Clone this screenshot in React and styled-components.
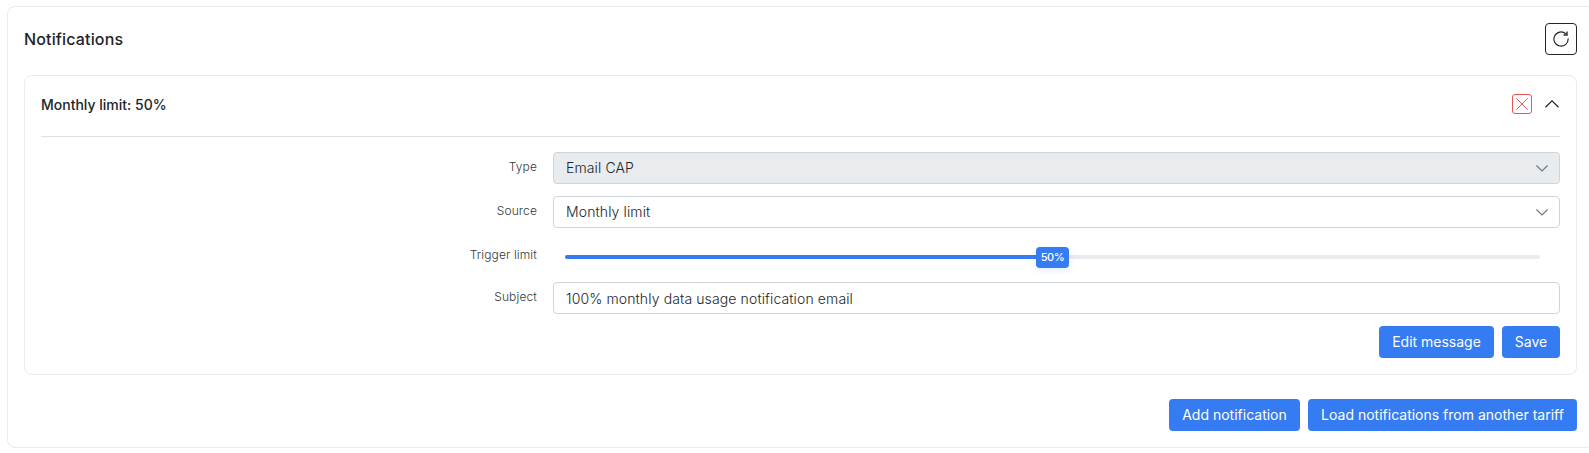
import React from "react";
import styled, { createGlobalStyle } from "styled-components";

const GlobalStyle = createGlobalStyle`
  *, *::before, *::after { box-sizing: border-box; }
  html, body { margin: 0; background: #fff; overflow: hidden; }
  body { font-family: Inter, "Liberation Sans", sans-serif; font-size: 14px; line-height: 20px; color: #212529; }
`;

const Page = styled.main`
  width: 1594px;
  height: 453px;
  padding: 6px 0 5px 7px;
`;

const Panel = styled.section`
  height: 442px;
  padding: 16px;
  border: 1px solid #e8ebed;
  border-radius: 8px;
`;

const PanelHeader = styled.header`
  display: flex;
  align-items: center;
  justify-content: space-between;
  height: 32px;
`;

const Title = styled.h2`
  margin: 0;
  font-size: 16px;
  line-height: 24px;
  font-weight: 500;
  letter-spacing: 0.15px;
`;

const RefreshButton = styled.button`
  display: grid;
  place-items: center;
  width: 32px;
  height: 32px;
  padding: 0;
  color: #212529;
  background: #fff;
  border: 1px solid #212529;
  border-radius: 4px;
`;

const Card = styled.article`
  height: 300px;
  margin-top: 20px;
  padding: 0 16px;
  border: 1px solid #e8ebed;
  border-radius: 8px;
`;

const CardHeader = styled.header`
  display: flex;
  align-items: center;
  justify-content: space-between;
  height: 61px;
  padding-bottom: 3px;
  border-bottom: 1px solid #dee0e3;
`;

const CardTitle = styled.h3`
  margin: 0;
  font-size: 14px;
  font-weight: 500;
`;

const CardTools = styled.div`
  display: flex;
  align-items: center;
  gap: 12px;
  padding-bottom: 2px;
`;

const IconButton = styled.button`
  display: grid;
  place-items: center;
  width: ${(p) => p.$width || 20}px;
  height: 20px;
  padding: 0;
  color: ${(p) => (p.$danger ? "#ea5455" : "#212529")};
  background: none;
  border: ${(p) => (p.$danger ? "1px solid currentColor" : "0")};
  border-radius: 3px;
`;

const Form = styled.div`
  display: grid;
  gap: 12px;
  padding-top: 15px;
`;

const Row = styled.div`
  display: grid;
  grid-template-columns: 496px 1fr;
  column-gap: 16px;
  height: ${(p) => p.$height || 32}px;
`;

const Label = styled.label`
  padding-top: 5px;
  font-size: 12px;
  font-weight: 350;
  letter-spacing: 0.12px;
  text-align: right;
  color: #34383c;
`;

const Field = styled.div`
  display: flex;
  align-items: center;
  justify-content: space-between;
  height: 32px;
  padding: ${(p) => (p.$input ? "2px 11px 0 12px" : "0 11px 0 12px")};
  background: ${(p) => (p.$disabled ? "#e9ecef" : "#fff")};
  border: 1px solid #ced4da;
  border-radius: 4px;
  font-weight: 350;
  letter-spacing: 0.12px;
`;

const SliderArea = styled.div`
  padding: 15px 20px 0 12px;
`;

const Track = styled.div`
  position: relative;
  height: 4px;
  border-radius: 2px;
  background: #e9ecef;
`;

const TrackFill = styled.div`
  height: 4px;
  border-radius: 2px;
  background: #357bf2;
`;

const Thumb = styled.div`
  position: absolute;
  top: -8.5px;
  margin-left: -16.5px;
  width: 33px;
  height: 21.5px;
  border-radius: 4px;
  font-size: 11px;
  line-height: 21px;
  font-weight: 500;
  letter-spacing: -0.4px;
  text-align: center;
  color: #fff;
  background: #357bf2;
  box-shadow: 0 2px 6px rgba(53, 123, 242, 0.15);
`;

const Actions = styled.div`
  display: flex;
  justify-content: flex-end;
  gap: 8px;
  margin-top: ${(p) => p.$top || 0}px;
`;

const Button = styled.button`
  width: ${(p) => p.$width}px;
  height: 32px;
  padding: 0;
  border: 0;
  border-radius: 4px;
  background: #357bf2;
  color: #fff;
  font: 400 14px/32px Inter, "Liberation Sans", sans-serif;
  text-align: center;
  white-space: nowrap;
`;

const RefreshIcon = () => (
  <svg width="16" height="16" viewBox="0 0 16 16" fill="none" stroke="currentColor" strokeWidth="1.15">
    <path d="M15.1 7.4A7.1 7.1 0 1 1 12.8 2.8" />
    <path d="M14 .6V4H10.5" strokeWidth="1.4" />
  </svg>
);

const CrossIcon = () => (
  <svg width="12" height="12" viewBox="0 0 12 12" fill="none" stroke="currentColor">
    <path d="M.3.3l11.4 11.4M11.7.3L.3 11.7" />
  </svg>
);

const ChevronUp = () => (
  <svg width="14" height="8" viewBox="0 0 14 8" fill="none" stroke="currentColor" strokeWidth="1.2">
    <path d="M.5 7.2L7 .9l6.5 6.3" />
  </svg>
);

const ChevronDown = () => (
  <svg width="12" height="7" viewBox="0 0 12 7" fill="none" stroke="#6c757d" strokeWidth="1.1">
    <path d="M.4.5L6 6l5.6-5.5" />
  </svg>
);

export default function App() {
  const limit = 50;
  return (
    <>
      <GlobalStyle />
      <Page>
        <Panel>
          <PanelHeader>
            <Title>Notifications</Title>
            <RefreshButton aria-label="Refresh"><RefreshIcon /></RefreshButton>
          </PanelHeader>
          <Card>
            <CardHeader>
              <CardTitle>Monthly limit: {limit}%</CardTitle>
              <CardTools>
                <IconButton $danger aria-label="Delete"><CrossIcon /></IconButton>
                <IconButton $width={16} aria-label="Collapse"><ChevronUp /></IconButton>
              </CardTools>
            </CardHeader>
            <Form>
              <Row>
                <Label>Type</Label>
                <Field $disabled>Email CAP<ChevronDown /></Field>
              </Row>
              <Row>
                <Label>Source</Label>
                <Field>Monthly limit<ChevronDown /></Field>
              </Row>
              <Row $height={30}>
                <Label>Trigger limit</Label>
                <SliderArea>
                  <Track>
                    <TrackFill style={{ width: `${limit}%` }} />
                    <Thumb style={{ left: `${limit}%` }}>{limit}%</Thumb>
                  </Track>
                </SliderArea>
              </Row>
              <Row>
                <Label>Subject</Label>
                <Field $input>100% monthly data usage notification email</Field>
              </Row>
              <Actions>
                <Button $width={115}>Edit message</Button>
                <Button $width={58}>Save</Button>
              </Actions>
            </Form>
          </Card>
          <Actions $top={24}>
            <Button $width={131}>Add notification</Button>
            <Button $width={269}>Load notifications from another tariff</Button>
          </Actions>
        </Panel>
      </Page>
    </>
  );
}
